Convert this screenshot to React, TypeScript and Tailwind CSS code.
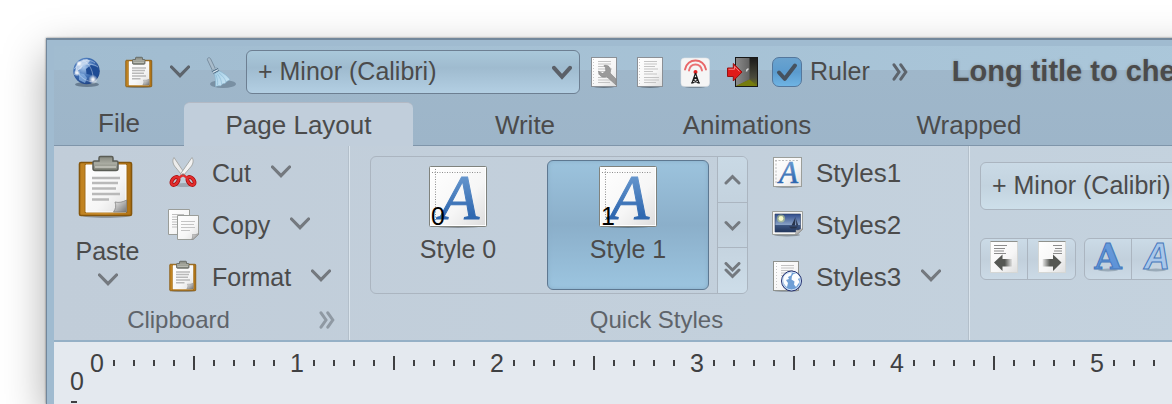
import React from "react";

type IconProps = { className?: string };

function SharedGradients() {
  return (
    <svg className="absolute h-0 w-0" aria-hidden="true">
      <defs>
        <linearGradient id="paper" x1="0" y1="0" x2="1" y2="1">
          <stop offset="0" stopColor="#ffffff" />
          <stop offset="0.6" stopColor="#f6f6f6" />
          <stop offset="1" stopColor="#dedede" />
        </linearGradient>
        <linearGradient id="board" x1="0" y1="0" x2="1" y2="0">
          <stop offset="0" stopColor="#c08220" />
          <stop offset="0.5" stopColor="#cb8f30" />
          <stop offset="1" stopColor="#b07212" />
        </linearGradient>
        <linearGradient id="clip" x1="0" y1="0" x2="0" y2="1">
          <stop offset="0" stopColor="#85877e" />
          <stop offset="0.5" stopColor="#a9aba1" />
          <stop offset="1" stopColor="#7b7d74" />
        </linearGradient>
        <linearGradient id="fold" x1="0" y1="0" x2="1" y2="1">
          <stop offset="0" stopColor="#f2f2f2" />
          <stop offset="1" stopColor="#757575" />
        </linearGradient>
        <linearGradient id="letter" x1="0" y1="0" x2="0" y2="1">
          <stop offset="0" stopColor="#7aa7d8" />
          <stop offset="0.75" stopColor="#2f68b0" />
          <stop offset="1" stopColor="#2a62aa" />
        </linearGradient>
        <linearGradient id="boldLetter" x1="0" y1="0" x2="0" y2="1">
          <stop offset="0" stopColor="#6a9ddc" />
          <stop offset="1" stopColor="#5a90d6" />
        </linearGradient>
        <radialGradient id="globe" cx="0.4" cy="0.35" r="0.7">
          <stop offset="0" stopColor="#a9c8ec" />
          <stop offset="0.55" stopColor="#3f6fb4" />
          <stop offset="1" stopColor="#1c3f80" />
        </radialGradient>
        <radialGradient id="glow">
          <stop offset="0" stopColor="#ffffff" />
          <stop offset="0.3" stopColor="#ffffff" stopOpacity="0.8" />
          <stop offset="1" stopColor="#ffffff" stopOpacity="0" />
        </radialGradient>
        <linearGradient id="bristle" x1="0" y1="0" x2="1" y2="1">
          <stop offset="0" stopColor="#a5cfe6" />
          <stop offset="1" stopColor="#cfe8f6" />
        </linearGradient>
        <linearGradient id="door" x1="0" y1="0" x2="1" y2="0">
          <stop offset="0" stopColor="#8b8b8b" />
          <stop offset="1" stopColor="#626262" />
        </linearGradient>
        <linearGradient id="doorway" x1="0" y1="0" x2="0" y2="1">
          <stop offset="0" stopColor="#1a1a1a" />
          <stop offset="0.7" stopColor="#4a4a3c" />
          <stop offset="1" stopColor="#73790c" />
        </linearGradient>
        <linearGradient id="sky" x1="0" y1="0" x2="0" y2="1">
          <stop offset="0" stopColor="#2f4c8c" />
          <stop offset="0.6" stopColor="#8aa3c6" />
          <stop offset="0.64" stopColor="#3c5580" />
          <stop offset="1" stopColor="#22365c" />
        </linearGradient>
        <linearGradient id="fadeLeft" x1="0" y1="0" x2="1" y2="0">
          <stop offset="0.6" stopColor="#555753" />
          <stop offset="1" stopColor="#555753" stopOpacity="0.1" />
        </linearGradient>
        <linearGradient id="fadeRight" x1="0" y1="0" x2="1" y2="0">
          <stop offset="0" stopColor="#555753" stopOpacity="0.1" />
          <stop offset="0.4" stopColor="#555753" />
        </linearGradient>
      </defs>
    </svg>
  );
}

function Chevron({ className = "" }: IconProps) {
  return (
    <svg viewBox="0 0 20 14" className={`h-[14px] w-5 shrink-0 ${className}`} fill="none" aria-hidden="true">
      <path d="M1.500 2 10 10.600 18.500 2" stroke="currentColor" strokeWidth="3.200" strokeLinecap="round" />
    </svg>
  );
}

function HeavyChevron({ className = "" }: IconProps) {
  return (
    <svg viewBox="0 0 20 16" className={`h-4 w-5 ${className}`} fill="none" aria-hidden="true">
      <path d="M2 3.800 10 12.800 18 3.800" stroke="#5b6068" strokeWidth="4" strokeLinecap="round" />
    </svg>
  );
}

function DoubleRight({ className = "" }: IconProps) {
  return (
    <svg viewBox="0 0 16 18" className={`h-[18px] w-4 shrink-0 ${className}`} fill="none" aria-hidden="true">
      <path d="M2 1.800 7 9l-5 7.200M8.800 1.800l5 7.200-5 7.200" stroke="currentColor" strokeWidth="3" strokeLinecap="round" />
    </svg>
  );
}

function GlobeIcon() {
  return (
    <svg viewBox="0 0 32 32" className="size-8 shrink-0" aria-hidden="true">
      <ellipse cx="16" cy="28.500" rx="12" ry="2.500" fill="#3d4f62" opacity="0.55" />
      <circle cx="15.500" cy="15" r="13.200" fill="url(#globe)" />
      <path d="M5 10c2-4 6-7 11-7l3 2-3 3-4 1-2 4-4 1.500-2 3z" fill="#e6f0fb" opacity="0.65" />
      <path d="m15 13 5-4 6 2 2.500 4-2 6-4 2-2-4-5-1z" fill="#1f4c95" />
      <path d="m8 17 5 1 3 4-2 5-6-3z" fill="#8db6e6" opacity="0.7" />
      <g fill="none" stroke="#eaf3ff" strokeWidth="0.600" opacity="0.7">
        <path d="M3 13c7-9 15-11 21-6M3.500 19C9 9 18 5 27 11M5 11c1 8 8 14 17 15M12 4c7 4 11 12 10 22" />
      </g>
      <circle cx="8" cy="7.500" r="3" fill="url(#glow)" />
      <circle cx="6" cy="17" r="3.400" fill="url(#glow)" />
      <circle cx="22" cy="23.500" r="4.800" fill="url(#glow)" />
    </svg>
  );
}

function ClipboardIcon({ className = "size-8" }: IconProps) {
  return (
    <svg viewBox="0 0 64 64" className={`shrink-0 ${className}`} aria-hidden="true">
      <ellipse cx="32" cy="61.500" rx="24" ry="2.500" fill="#000" opacity="0.25" />
      <rect x="5.500" y="8.500" width="52" height="53" rx="1.500" fill="url(#board)" stroke="#85560c" strokeWidth="1.600" />
      <path d="M10.500 10h43v49h-43z" fill="#8f6018" opacity="0.6" />
      <path d="M12 11h40v47H12z" fill="url(#paper)" stroke="#fff" />
      <path d="M52.500 46v12H39.500c2-3 3-6 1.500-10 4 1 8 0 11.500-2z" fill="url(#fold)" stroke="#7a7a7a" strokeWidth="0.700" />
      <path d="M18 24h28M18 29h26M18 34.500h24M18 40h28M18 45.500h17" stroke="#b9b9b9" strokeWidth="2.600" />
      <path d="M25 7V4q0-1.500 1.500-1.500h11Q39 2.500 39 4v3h3.500Q44 7 44 8.500v6q0 2-2 2H21q-2 0-2-2v-6Q19 7 20.500 7z" fill="url(#clip)" stroke="#5a5c55" strokeWidth="1.500" />
      <path d="M21 13h21" stroke="#c3c5bc" strokeWidth="1.600" />
    </svg>
  );
}

function BroomIcon() {
  return (
    <svg viewBox="0 0 32 32" className="size-8 shrink-0" aria-hidden="true">
      <ellipse cx="19" cy="28" rx="13" ry="4" fill="#42566a" opacity="0.4" />
      <path d="M3.500 4c-.8-2 2-3.200 3-1.400L11.500 13l-3 1.600z" fill="#a9bccb" stroke="#74899b" strokeWidth="0.900" />
      <path d="m7.500 14.500 5.500-3 3 4-5.500 3.500z" fill="#dbe8f1" stroke="#7f98ab" strokeWidth="0.600" />
      <path d="m8 15.500 6-3M9.500 17.500l5.500-3" stroke="#4d6c86" strokeWidth="1.200" />
      <path d="m10.500 18 5-3c4 2 8 5 10.500 8.500-2 1.500-4 2-5 4-2 0-3 .5-4.500 2.500-2-.5-3.500 0-5 .500.300-4 0-8-1-12.500z" fill="url(#bristle)" stroke="#86b3cf" strokeWidth="0.600" />
      <path d="M12 19c1.500 4 2 7 1.500 10M13.500 18c3 4 4 7 4 10M15 17c4 3 6 6 7 9" fill="none" stroke="#7eafcd" strokeWidth="0.500" />
    </svg>
  );
}

function DocumentIcon({ wrench = false }: { wrench?: boolean }) {
  return (
    <svg viewBox="0 0 32 32" className="size-8 shrink-0" aria-hidden="true">
      <ellipse cx="16" cy="30.500" rx="11" ry="1.500" fill="#000" opacity="0.35" />
      <rect x="3.500" y="1.500" width="25" height="29" fill="url(#paper)" stroke="#8b9096" />
      <path d="M5.500 3v26" stroke="#c9c9c9" strokeDasharray="1 2" />
      <path d="M10 5.500h13M10 8h13M10 10.500h11M10 13h14M10 15.500h9M10 18h13M10 21.500h15M10 24h15M10 26.500h12" stroke="#c4c4c4" strokeWidth="1.100" />
      {wrench && (
        <path
          d="M16 9.500c3-.8 6 .8 6.500 4 .3 1.600 0 2.500-.4 3.500l5.900 6v6l-9.500-8.500c-1.500.8-4 .8-5.500-.3-1.500-1-2.500-3-2.500-5l4 2.300 3.300-2.300-.3-3.400z"
          fill="#9a9a9a"
          stroke="#858585"
          strokeWidth="0.600"
        />
      )}
    </svg>
  );
}

function AntennaIcon() {
  return (
    <svg viewBox="0 0 32 32" className="size-8 shrink-0" aria-hidden="true">
      <ellipse cx="16" cy="30" rx="12" ry="2" fill="#000" opacity="0.25" />
      <rect x="2" y="2" width="28.500" height="28.500" rx="3.500" fill="#f5f5f5" stroke="#dfe3e6" strokeWidth="0.600" />
      <g fill="none" stroke="#e3292c" strokeLinecap="round">
        <path d="M6 13.500C8 1.500 25 1.500 27 13.500" strokeWidth="1.900" opacity="0.7" />
        <path d="M10 14.500C11.500 6.500 21.500 6.500 23 14.500" strokeWidth="1.900" opacity="0.65" />
      </g>
      <circle cx="16.500" cy="16" r="2" fill="#e02020" />
      <path d="m16.500 17-3.500 10m3.500-10 3.500 10M15 21l3.500 2.500M18 21l-3.500 2.500M14 24l5.500 3M19 24l-5.500 3M12 27h2.500m4 0H21" fill="none" stroke="#1b1b1b" strokeWidth="1.200" />
    </svg>
  );
}

function ExitIcon() {
  return (
    <svg viewBox="0 0 32 32" className="size-8 shrink-0" aria-hidden="true">
      <rect x="9.500" y="1.500" width="22" height="29" fill="url(#doorway)" stroke="#171717" />
      <path d="M10 2h13.500v21.500L10 30z" fill="url(#door)" />
      <path d="M10 30 23.500 23.500 31 30z" fill="#767c0d" />
      <path d="M20.500 15.500c0-1.600 1-2.500 2-2.800" fill="none" stroke="#d9d9d9" strokeWidth="1.500" />
      <path d="M1.500 12h5.800V7.500L16 16l-8.700 9v-4.500H1.500z" fill="#df1a1a" stroke="#981010" />
      <path d="M2.500 13.300h6v-3l5 5.200" fill="none" stroke="#f68080" strokeWidth="1" />
    </svg>
  );
}

function ScissorsIcon() {
  return (
    <svg viewBox="0 0 32 32" className="size-8 shrink-0" aria-hidden="true">
      <ellipse cx="17" cy="29" rx="9" ry="2" fill="#000" opacity="0.18" />
      <path d="M7 1.500c-2 3-1 6 .5 8.500l8.500 10.500 2-2.500z" fill="#ececec" stroke="#9a9c98" strokeWidth="0.800" />
      <path d="M25 1.500c2 3 1 6-.5 8.500L15.500 20.500 13.500 18z" fill="#f3f3f3" stroke="#9a9c98" strokeWidth="0.800" />
      <g fill="none" stroke="#a30d0d" strokeWidth="3.800">
        <ellipse cx="8" cy="25" rx="2.800" ry="4.600" transform="rotate(38 8 25)" />
        <ellipse cx="24" cy="25" rx="2.800" ry="4.600" transform="rotate(-38 24 25)" />
      </g>
      <g fill="none" stroke="#e42d2d" strokeWidth="2.400">
        <ellipse cx="8" cy="25" rx="2.800" ry="4.600" transform="rotate(38 8 25)" />
        <ellipse cx="24" cy="25" rx="2.800" ry="4.600" transform="rotate(-38 24 25)" />
        <path d="m11.500 22 4.500-3 4.500 3" />
      </g>
      <circle cx="16" cy="18.500" r="0.900" fill="#777" />
    </svg>
  );
}

function CopyIcon() {
  return (
    <svg viewBox="0 0 32 32" className="size-8 shrink-0" aria-hidden="true">
      <path d="M1.500 1.500h21v25h-21z" fill="url(#paper)" stroke="#9a9d99" />
      <path d="M5 6.500h12M5 9h5M5 11.500h5M5 14h5M5 16.500h5M5 19h5" stroke="#c0c0c0" />
      <path d="M10.500 7.500h21v19l-5.500 5H10.500z" fill="url(#paper)" stroke="#9a9d99" />
      <path d="M14 13.500h14M14 16.500h13M14 19.500h14M14 22.500h9" stroke="#c4c4c4" strokeWidth="1.200" />
      <path d="M31.500 25.500v1l-5.500 5h-1.500c1-1.500 1.500-3 1-5 2 .5 4 0 6-1z" fill="url(#fold)" stroke="#8a8a8a" strokeWidth="0.600" />
    </svg>
  );
}

function StyleThumb() {
  return (
    <svg viewBox="0 0 58 62" className="h-[62px] w-[58px]" aria-hidden="true">
      <ellipse cx="29" cy="60.500" rx="22" ry="1.500" fill="#000" opacity="0.3" />
      <rect x="0.500" y="0.500" width="57" height="60" rx="1" fill="#fff" stroke="#7f827d" />
      <rect x="2" y="2" width="54" height="57" fill="url(#paper)" />
      <path d="M3 6.500h49M6.500 3v52" stroke="#8e8e8e" strokeDasharray="1 1.500" />
      <text x="11" y="52.500" fontFamily="Liberation Serif, serif" fontStyle="italic" fontSize="64" fill="url(#letter)" stroke="url(#letter)" strokeWidth="1">
        A
      </text>
    </svg>
  );
}

function StyleIcon() {
  return (
    <svg viewBox="0 0 32 32" className="size-8 shrink-0" aria-hidden="true">
      <ellipse cx="16" cy="30.800" rx="12" ry="1" fill="#000" opacity="0.3" />
      <rect x="2.500" y="1.500" width="28" height="29" fill="url(#paper)" stroke="#9b9e9a" />
      <path d="M4 4.500h24M5 4v23" stroke="#bdbdbd" strokeDasharray="2 1.500" />
      <text x="8" y="27" fontFamily="Liberation Serif, serif" fontStyle="italic" fontSize="31" fill="url(#letter)" stroke="url(#letter)" strokeWidth="0.600">
        A
      </text>
    </svg>
  );
}

function PhotoIcon() {
  return (
    <svg viewBox="0 0 32 32" className="size-8 shrink-0" aria-hidden="true">
      <ellipse cx="16" cy="27" rx="13" ry="1.500" fill="#000" opacity="0.3" />
      <path d="M1.500 3.500h30v18L26 26.500H1.500z" fill="#f4f4f2" stroke="#9b9e9a" />
      <path d="M4 6h25.500v15L25 24H4z" fill="url(#sky)" stroke="#2b3f66" strokeWidth="0.600" />
      <circle cx="10" cy="10.500" r="4" fill="#d8e68a" opacity="0.5" />
      <circle cx="10" cy="10.500" r="2.400" fill="#f7f9c8" />
      <path d="m24.500 9-4 8.500h3.500zM25.200 11v6.500h2zM18 18.500h9l-2.500 2H20z" fill="#28344b" />
      <path d="M31.500 20.500v1L26 26.500h-2c1-1.500 1.200-2.800 1-4.500 2.500.5 4.500-.2 6.500-1.500z" fill="url(#fold)" stroke="#8a8a8a" strokeWidth="0.500" />
    </svg>
  );
}

function WebDocIcon() {
  return (
    <svg viewBox="0 0 32 32" className="size-8 shrink-0" aria-hidden="true">
      <ellipse cx="15" cy="30.800" rx="12" ry="1" fill="#000" opacity="0.3" />
      <rect x="2.500" y="1.500" width="25" height="29" fill="url(#paper)" stroke="#8f928e" />
      <path d="M5.500 3v26" stroke="#c9c9c9" strokeDasharray="1 2" />
      <path d="M10 5.500h13M10 8h13M10 10.500h12M10 13h8M10 15.500h3" stroke="#c2c2c2" />
      <circle cx="20.500" cy="21" r="10" fill="#6f9fd6" stroke="#27306e" strokeWidth="1" />
      <circle cx="20.500" cy="21" r="8.900" fill="none" stroke="#dce9f7" strokeWidth="0.900" />
      <path d="M13 16.500c2-3 5-4 8-4l-1 3-3 1.500 1 2-3 1 2 3-1 4c-3-2-5-6-3-10.500zM22.500 14l3.500-.5 3 4-2 1.500 1.500 3-3.500 5-2-2.500.5-3-3-2 .5-3.500z" fill="#fbfdff" />
    </svg>
  );
}

function IndentIcon({ direction }: { direction: "left" | "right" }) {
  const left = direction === "left";
  return (
    <svg viewBox="0 0 28 32" className="h-8 w-7 shrink-0" aria-hidden="true">
      <rect x="0.500" y="0.500" width="27" height="31" fill="url(#paper)" stroke="#d5d7d5" />
      <path d="M0.500 0.500h27" stroke="#8f928e" />
      <path
        d={left ? "M4 4.500h13M4 7.500h11M4 10h10M4 12.500h12" : "M15 4.500h9M17 7.500h7M16 10h8M15 12.500h9"}
        stroke="#8b8b8b"
        strokeWidth="1.200"
      />
      {left ? (
        <path d="M4 21.500 12.500 13.500v4.500H22v7.500H12.500V30z" fill="url(#fadeLeft)" />
      ) : (
        <path d="M23.500 21.500 15 13.500v4.500H4.500v7.500H15V30z" fill="url(#fadeRight)" />
      )}
    </svg>
  );
}

function LetterIcon({ italic = false }: { italic?: boolean }) {
  return (
    <svg viewBox="0 0 32 32" className="size-8 shrink-0 overflow-visible" aria-hidden="true">
      <ellipse cx="16" cy="29" rx="10" ry="1.500" fill="#54687a" opacity="0.4" />
      <text
        x={italic ? 17 : 16}
        y="28"
        textAnchor="middle"
        fontFamily={italic ? "Liberation Sans, sans-serif" : "DejaVu Serif, serif"}
        fontStyle={italic ? "italic" : "normal"}
        fontWeight="700"
        fontSize={italic ? 36 : 35}
        fill={italic ? "#a9c7ea" : "url(#boldLetter)"}
        stroke="#4577bb"
        strokeWidth="1"
      >
        A
      </text>
    </svg>
  );
}

function FontSelect({ id, className }: { id: string; className: string }) {
  return (
    <div className="relative shrink-0">
      <label htmlFor={id} className="sr-only">
        Font
      </label>
      <select id={id} className={`appearance-none rounded-md border pl-[11px] text-[25px] text-[#4b4b4b] ${className}`}>
        <option>+ Minor (Calibri)</option>
      </select>
      <HeavyChevron className="pointer-events-none absolute top-1/2 right-2 -translate-y-1/2" />
    </div>
  );
}

function TitleToolbar() {
  return (
    <header className="flex h-[52px] items-center pl-[17px]">
      <button aria-label="Web"><GlobeIcon /></button>
      <button aria-label="Clipboard" className="ml-5"><ClipboardIcon /></button>
      <button aria-label="Clipboard options" className="ml-[15px] text-[#5d646c]"><Chevron /></button>
      <button aria-label="Clear" className="ml-[14px]"><BroomIcon /></button>
      <div className="ml-[10px]">
        <FontSelect
          id="title-font"
          className="h-11 w-[334px] border-[#6d7f92] bg-linear-to-b from-[#a9c8da] via-[#9fbbcf] via-40% to-[#b3cfe3]"
        />
      </div>
      <button aria-label="Settings" className="ml-2"><DocumentIcon wrench /></button>
      <button aria-label="Document" className="ml-[14px]"><DocumentIcon /></button>
      <button aria-label="Broadcast" className="ml-[13px]"><AntennaIcon /></button>
      <button aria-label="Exit" className="ml-[15px]"><ExitIcon /></button>
      <label className="ml-[14px] flex shrink-0 items-center gap-2 text-[25px] text-[#4b4b4b]">
        <span className="relative block size-[30px]">
          <input
            type="checkbox"
            defaultChecked
            className="peer block size-[30px] appearance-none rounded-[7px] border border-[#54779c] bg-linear-to-b from-[#6aa3cf] via-[#5b9bce] to-[#6fb4e4]"
          />
          <svg viewBox="0 0 30 30" className="pointer-events-none invisible absolute inset-0 size-[30px] peer-checked:visible" fill="none" aria-hidden="true">
            <path d="M7 15.500 12.800 21.800 23 8.500" stroke="#46525f" strokeWidth="4" strokeLinecap="round" strokeLinejoin="round" />
          </svg>
        </span>
        Ruler
      </label>
      <button aria-label="More tools" className="ml-[22px] text-[#5d646c]"><DoubleRight /></button>
      <h1 className="ml-11 text-[29px] font-bold whitespace-nowrap text-[#4b4b4b] [text-shadow:0_0_3px_rgba(75,75,75,0.35)]">
        Long title to check the window caption
      </h1>
    </header>
  );
}

const tabs = ["Page Layout", "Write", "Animations", "Wrapped"];

function TabBar() {
  return (
    <nav className="flex h-12 items-end text-[26px] text-[#4b4b4b]" role="tablist">
      <button className="h-12 w-[130px] shrink-0 border-b border-[#7f95aa] pt-[3px]">File</button>
      {tabs.map((tab, index) => (
        <button
          key={tab}
          role="tab"
          aria-selected={index === 0}
          className={
            index === 0
              ? "h-11 w-[229px] shrink-0 rounded-t-md border-t border-[#b3b9c4] bg-[#c1cedb] pt-[2px]"
              : "h-11 w-[222px] shrink-0 border-b border-[#7f95aa] pt-1 pl-[2px]"
          }
        >
          {tab}
        </button>
      ))}
      <div className="h-11 grow border-b border-[#7f95aa]" />
    </nav>
  );
}

function RibbonGroup({ title, action, className, children }: { title: string; action?: React.ReactNode; className: string; children: React.ReactNode }) {
  return (
    <section className={`flex shrink-0 flex-col border-r border-[#dbe5ed] shadow-[inset_-1px_0_0_#b3bfca] ${className}`}>
      <div className="flex h-[156px]">{children}</div>
      <div className="flex h-9 items-center text-2xl text-[#5f646a]">
        <span className={action ? "flex-1 text-center" : "flex-1 pr-[6px] text-center"}>{title}</span>
        {action}
      </div>
    </section>
  );
}

function SmallButton({ icon, label, menu = false }: { icon: React.ReactNode; label: string; menu?: boolean }) {
  return (
    <button className="flex h-[52px] items-center">
      {icon}
      <span className="ml-[13px] pt-[3px]">{label}</span>
      {menu && <Chevron className="ml-5 text-[#74797f]" />}
    </button>
  );
}

function ClipboardGroup() {
  return (
    <RibbonGroup
      title="Clipboard"
      className="w-[296px]"
      action={
        <button aria-label="Clipboard options" className="mr-[14px] ml-4 text-[#8f99a3]">
          <DoubleRight />
        </button>
      }
    >
      <button className="flex w-[107px] flex-col items-center pt-2 text-[25px] text-[#4b4b4b]">
        <ClipboardIcon className="mr-1 size-16" />
        <span className="mt-[18px] leading-[30px]">Paste</span>
        <Chevron className="mt-[7px] text-[#74797f]" />
      </button>
      <div className="ml-[6px] flex flex-col items-start text-[25px] text-[#4b4b4b]">
        <SmallButton icon={<ScissorsIcon />} label="Cut" menu />
        <SmallButton icon={<CopyIcon />} label="Copy" menu />
        <SmallButton icon={<ClipboardIcon />} label="Format" menu />
      </div>
    </RibbonGroup>
  );
}

function GalleryItem({ index, selected = false }: { index: number; selected?: boolean }) {
  return (
    <button
      aria-pressed={selected}
      className={`flex h-[130px] w-[162px] flex-col items-center rounded-md border pt-[5px] ${
        selected
          ? "border-[#5e7891] bg-linear-to-b from-[#9cc3dd] via-[#8bafca] to-[#9cc5e0] shadow-[inset_0_0_4px_#86abc6]"
          : "border-transparent"
      }`}
    >
      <span className="relative block shrink-0">
        <StyleThumb />
        <span className="absolute bottom-0 left-[2px] text-[25px] leading-[24px] text-black">{index}</span>
      </span>
      <span className="mt-[6px] text-[25px] leading-[30px] text-[#4b4b4b]">Style {index}</span>
    </button>
  );
}

const scrollButtons = [
  { label: "Previous styles", path: "M2 12 8.500 5.500 15 12" },
  { label: "Next styles", path: "M2 5.500 8.500 12 15 5.500" },
  { label: "All styles", path: "M2 1.500 8.500 8 15 1.500M2 8 8.500 14.500 15 8" },
];

function StylesGroup() {
  return (
    <RibbonGroup title="Quick Styles" className="w-[620px]">
      <div className="mt-[10px] ml-5 flex h-[138px] w-[378px] items-center rounded-md border border-[#abb5c0]">
        <div className="flex grow gap-2 pl-[6px]">
          <GalleryItem index={0} />
          <GalleryItem index={1} selected />
        </div>
        <div className="flex h-full w-[30px] flex-col divide-y divide-[#abb5c0] overflow-hidden rounded-r-[5px] border-l border-[#abb5c0] bg-linear-to-b from-[#c9d9e5] via-[#c1cfdb] to-[#cddde9]">
          {scrollButtons.map((button) => (
            <button key={button.label} aria-label={button.label} className="flex flex-1 items-center justify-center">
              <svg viewBox="0 0 17 17" className="size-[17px]" fill="none" aria-hidden="true">
                <path d={button.path} stroke="#74797f" strokeWidth="3" strokeLinecap="round" />
              </svg>
            </button>
          ))}
        </div>
      </div>
      <div className="ml-[23px] flex flex-col items-start text-[26px] text-[#4b4b4b]">
        <SmallButton icon={<StyleIcon />} label="Styles1" />
        <SmallButton icon={<PhotoIcon />} label="Styles2" />
        <SmallButton icon={<WebDocIcon />} label="Styles3" menu />
      </div>
    </RibbonGroup>
  );
}

function Segmented({ children }: { children: React.ReactNode }) {
  return (
    <div className="flex h-[42px] divide-x divide-[#abb5c0] rounded-md border border-[#abb5c0] bg-linear-to-b from-[#cbdbe7] via-[#c2d0dc] to-[#cbdae6]">
      {children}
    </div>
  );
}

function FontGroup() {
  const cell = "flex w-[47px] items-center justify-center pb-1";
  return (
    <section className="flex shrink-0 flex-col gap-7 pt-4 pl-[10px]">
      <FontSelect
        id="ribbon-font"
        className="h-12 w-[334px] border-[#abb5c0] bg-linear-to-b from-[#cadae6] via-[#c3d3df] to-[#cddfea]"
      />
      <div className="flex gap-2">
        <Segmented>
          <button aria-label="Decrease indent" className={cell}><IndentIcon direction="left" /></button>
          <button aria-label="Increase indent" className={cell}><IndentIcon direction="right" /></button>
        </Segmented>
        <Segmented>
          <button aria-label="Bold" className={cell}><LetterIcon /></button>
          <button aria-label="Italic" className={cell}><LetterIcon italic /></button>
        </Segmented>
      </div>
    </section>
  );
}

function RulerUnit({ value }: { value: number }) {
  return (
    <div className="flex w-[200px] shrink-0 items-center">
      <span className="flex w-5 justify-end">{value}</span>
      {[1, 2, 3, 4, 5, 6, 7, 8, 9].map((step) => (
        <span key={step} className="flex w-5 justify-center">
          <span className={step === 5 ? "h-[14px] w-[2px] bg-[#3f4042]" : "h-[6px] w-[2px] bg-[#3f4042]"} />
        </span>
      ))}
    </div>
  );
}

function RulerArea() {
  return (
    <main className="grow bg-[#e4e9ef] pt-[6px] text-[25px] leading-[30px] text-[#3f4042]">
      <div className="flex h-[30px] pl-[30px]">
        {[0, 1, 2, 3, 4, 5, 6, 7, 8, 9].map((value) => (
          <RulerUnit key={value} value={value} />
        ))}
      </div>
      <div className="-mt-3 flex w-9 flex-col items-start pl-4">
        <span>0</span>
        <span className="mt-[5px] ml-[1px] h-[2px] w-[6px] bg-[#3f4042]" />
      </div>
    </main>
  );
}

export default function App() {
  return (
    <div className="flex h-screen overflow-hidden bg-white pt-[38px] pl-[46px] font-['Liberation_Sans',Arial,sans-serif]">
      <SharedGradients />
      <div className="-mr-10 flex min-w-0 grow flex-col border-t-2 border-l border-[#72879b] bg-[#a0bbd0] pt-[6px] pl-[7px] shadow-[0_16px_40px_rgba(0,0,0,0.34),0_0_2px_rgba(0,0,0,0.5)]">
        <div className="flex min-w-0 grow flex-col overflow-hidden">
          <div className="bg-[linear-gradient(to_bottom,transparent_24px,#9fb7ca_24px,#9db5c9_100%),linear-gradient(to_right,#a1bcd0,#abc7da)]">
            <TitleToolbar />
            <TabBar />
          </div>
          <div className="flex h-[196px] shrink-0 border-b-2 border-[#95b0c6] bg-linear-to-r from-[#c1cdd9] to-[#c4d2de]">
            <ClipboardGroup />
            <StylesGroup />
            <FontGroup />
          </div>
          <RulerArea />
        </div>
      </div>
    </div>
  );
}
